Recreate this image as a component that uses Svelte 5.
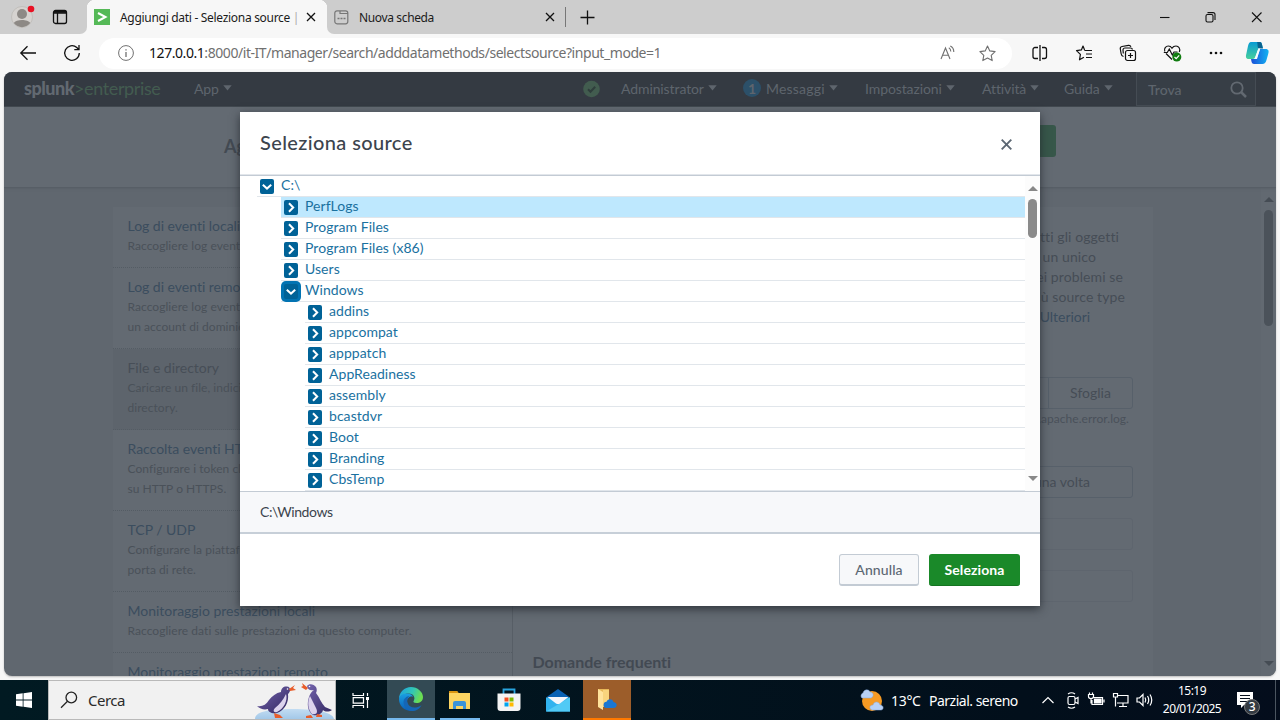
<script>
  const methods = [
    { title: 'Log di eventi locali', lines: ['Raccogliere log eventi'] },
    { title: 'Log di eventi remoti', lines: ['Raccogliere log eventi', 'un account di dominio.'] },
    { title: 'File e directory', lines: ['Caricare un file, indicizzare', 'directory.'], active: true },
    { title: 'Raccolta eventi HTTP', lines: ['Configurare i token che', 'su HTTP o HTTPS.'] },
    { title: 'TCP / UDP', lines: ['Configurare la piattaforma', 'porta di rete.'] },
    { title: 'Monitoraggio prestazioni locali', lines: ['Raccogliere dati sulle prestazioni da questo computer.'] },
    { title: 'Monitoraggio prestazioni remoto', lines: [] }
  ];
  const tree = [
    { name: 'C:\\', level: 0, open: true },
    { name: 'PerfLogs', level: 1, selected: true },
    { name: 'Program Files', level: 1 },
    { name: 'Program Files (x86)', level: 1 },
    { name: 'Users', level: 1 },
    { name: 'Windows', level: 1, open: true, focused: true },
    { name: 'addins', level: 2 },
    { name: 'appcompat', level: 2 },
    { name: 'apppatch', level: 2 },
    { name: 'AppReadiness', level: 2 },
    { name: 'assembly', level: 2 },
    { name: 'bcastdvr', level: 2 },
    { name: 'Boot', level: 2 },
    { name: 'Branding', level: 2 },
    { name: 'CbsTemp', level: 2 }
  ];
  const nav = ['Impostazioni', 'Attività', 'Guida'];
</script>

{#snippet caret()}
  <svg class="caret" width="9" height="6" viewBox="0 0 9 6"><path d="M.3.3h8.4L4.5 5.6z" fill="currentColor" /></svg>
{/snippet}

{#snippet cross()}
  <svg width="10" height="10" viewBox="0 0 10 10"><path d="M1 1l8 8M9 1l-8 8" stroke="#111" stroke-width="1.3" /></svg>
{/snippet}

<div class="screen">
  <div class="tabs">
    <div class="lead">
      <svg width="24" height="28" viewBox="0 0 24 28">
        <circle cx="11" cy="14" r="10.5" fill="#d6d3d0" stroke="#bab7b3" stroke-width=".7" />
        <circle cx="11" cy="11" r="5" fill="#8d8985" /><path d="M2.8 20c2-4 14.400-4 16.400 0-4 5.500-12.400 5.500-16.400 0z" fill="#8d8985" />
        <circle cx="20" cy="6" r="3.300" fill="#e81123" />
      </svg>
      <svg width="16" height="16" viewBox="0 0 16 16" fill="none" stroke="#111" stroke-width="1.300"><rect x="1.500" y="1.500" width="13" height="13" rx="2" /><path d="M1.500 4h13M5.500 4v10.500" /><path d="M2 2.800h12" stroke-width="2" /></svg>
    </div>
    <div class="tab active">
      <svg width="16" height="16" viewBox="0 0 16 16"><path d="M0 0h16v16H0z" fill="#55b957" /><path d="M4 4l7.500 4L4 12" fill="none" stroke="#fff" stroke-width="2" /></svg>
      <span class="tabtext one">Aggiungi dati - Seleziona source <i>|</i></span>
      {@render cross()}
    </div>
    <div class="tab second">
      <svg width="15" height="15" viewBox="0 0 15 15" fill="none" stroke="#777" stroke-width="1.200"><rect x=".8" y=".8" width="13" height="13" rx="2.200" /><path d="M6 1v2.500h8" /><path d="M3.500 8.500h8" stroke-dasharray="2 1" stroke-width="1.700" /></svg>
      <span class="tabtext two">Nuova scheda</span>
      {@render cross()}
      <b class="sep"></b>
      <svg width="15" height="15" viewBox="0 0 15 15"><path d="M7.500.5v14M.5 7.500h14" stroke="#111" stroke-width="1.300" /></svg>
    </div>
    <div class="winbtns">
      <svg width="108" height="14" viewBox="0 0 108 14" fill="none" stroke="#111" stroke-width="1.100"><path d="M0 7.500h9.500" /><rect x="46" y="4.500" width="7" height="7.500" rx="1.500" /><path d="M47.500 2.600h5.500a2 2 0 0 1 2 2v5.500" /><path d="M92 2.500l9.500 9.500M101.500 2.500L92 12" /></svg>
    </div>
  </div>

  <div class="toolbar">
    <svg width="18" height="16" viewBox="0 0 18 16" fill="none" stroke="#111" stroke-width="1.300"><path d="M17 8H2M8.500 1.300L1.800 8l6.700 6.700" /></svg>
    <svg class="reload" width="18" height="18" viewBox="0 0 18 18" fill="none" stroke="#111" stroke-width="1.300"><path d="M16.300 9a7.300 7.300 0 1 1-2.500-5.500L16 5.700M16 1v4.700h-4.700" /></svg>
    <div class="address">
      <svg width="16" height="16" viewBox="0 0 16 16" fill="none" stroke="#707070"><circle cx="8" cy="8" r="7.400" /><path d="M8 7v5M8 4.200v1.400" stroke-width="1.300" /></svg>
      <span class="url"><b>127.0.0.1</b>:8000/it-IT/manager/search/adddatamethods/selectsource?input_mode=1</span>
      <svg width="16" height="16" viewBox="0 0 16 16" fill="none" stroke="#707070" stroke-width="1.100"><path d="M1 14L5.500 3 10 14M2.600 10.300h5.800M8.800 2.800q2 1 2 3.700M10.300 1q3.500 1.600 3.500 6" /></svg>
      <svg class="star" width="17" height="17" viewBox="0 0 17 17" fill="none" stroke="#707070" stroke-width="1.100" stroke-linejoin="round"><path d="M8.500 1l2.300 4.900 5.300.7-3.900 3.700 1 5.300-4.700-2.600-4.700 2.600 1-5.300L.9 6.600l5.300-.7z" /></svg>
    </div>
    <div class="actions">
      <svg width="18" height="18" viewBox="0 0 18 18" fill="none" stroke="#111" stroke-width="1.300"><path d="M7 3.500H4a2 2 0 0 0-2 2v7a2 2 0 0 0 2 2h3M11 3.500h2.500a2 2 0 0 1 2 2v7a2 2 0 0 1-2 2H11M9 1v16" /></svg>
      <svg width="18" height="18" viewBox="0 0 18 18" fill="none" stroke="#111" stroke-width="1.200" stroke-linejoin="round"><path d="M9.500 6.500H17M11 10h6M11 13.500h6M8.900 13.200l-4.400 2.600.9-5.400-3.900-3.800 4.900-.7L8 2l1.600 3.900" /></svg>
      <svg width="18" height="18" viewBox="0 0 18 18" fill="none" stroke="#111" stroke-width="1.200"><rect x="6.500" y="6.500" width="10" height="10" rx="2" /><path d="M11.500 9v5M9 11.500h5M4.500 12.500A3 3 0 0 1 2.200 10L1.300 5A2.200 2.200 0 0 1 3 2.500L9.500 1.400a2.200 2.200 0 0 1 2.400 1.500M4.300 9.500L4 6a2 2 0 0 1 2-2h5.500a2 2 0 0 1 2 1.500" /></svg>
      <svg width="19" height="18" viewBox="0 0 19 18" fill="none" stroke="#111" stroke-width="1.200"><path d="M1.800 7.500C.6 4.500 3 2 5.300 2 7.300 2 8.400 3.200 9 4.200 9.800 3 11 2 13 2c2.500 0 4.800 2.800 3.300 6M9 15.500L3 9.500M.8 8.500h3.500L6.300 5l3 6 1.700-3h3.500" /><circle cx="13.800" cy="13" r="4.500" fill="#107c10" stroke="none" /><path d="M11.500 13l1.700 1.700 3-3.300" stroke="#fff" /></svg>
      <svg width="16" height="18" viewBox="0 0 16 18"><g fill="#111"><circle cx="3" cy="9" r="1.300" /><circle cx="8" cy="9" r="1.300" /><circle cx="13" cy="9" r="1.300" /></g></svg>
      <svg class="copilot" width="24" height="24" viewBox="0 0 24 24">
        <defs><linearGradient id="ca" x2="0" y2="1"><stop stop-color="#079bd4" /><stop offset="1" stop-color="#47cf9c" /></linearGradient><linearGradient id="cb" x2="1" y2="0"><stop stop-color="#1c4fd8" /><stop offset="1" stop-color="#13b3f2" /></linearGradient></defs>
        <path d="M9 23c-2.500 0-2.500-3-3-5h6l3-10h5.500c3.500 0 3.500 2.500 2.700 5L21.500 19c-.7 2.700-2 4-4 4z" fill="url(#cb)" />
        <path d="M6 1h9c2 0 2 3 3 6h-4.500l-3.500 9.500q-.7 1.500-2.500 1.500H4c-3 0-3.500-2-2.700-5L3 5c.7-2.500 1.500-4 3-4z" fill="url(#ca)" />
        <path d="M12 1h3c2 0 2 3 3 6.500h-4c-2 0-1-5-2-6.500z" fill="#08628f" /><path d="M13.500 7.500h1.800l-3.600 10H10z" fill="#f4fbff" />
      </svg>
    </div>
  </div>

  <div class="page">
    <div class="navbar">
      <div class="logo"><b>splunk</b><span>&gt;enterprise</span></div>
      <div class="item">App {@render caret()}</div>
      <svg width="18" height="18" viewBox="0 0 18 18"><circle cx="8.500" cy="9" r="8.300" fill="#425c4f" /><path d="M5 9.200l2.500 2.500 4.700-5" fill="none" stroke="#2f3e3c" stroke-width="2" /></svg>
      <div class="item">Administrator {@render caret()}</div>
      <div class="item"><span class="count">1</span><span class="msg">Messaggi</span> {@render caret()}</div>
      {#each nav as n}<div class="item">{n} {@render caret()}</div>{/each}
      <div class="find"><span>Trova</span>
        <svg width="17" height="17" viewBox="0 0 17 17" fill="none" stroke="#626971"><circle cx="7" cy="7" r="5.700" stroke-width="1.800" /><path d="M11 11l5 5" stroke-width="2.500" /></svg>
      </div>
    </div>
    <div class="subhead"><strong>Ag</strong><span class="next"></span></div>
    <div class="body">
      <div class="card">
        <div class="methods">
          {#each methods as m}
            <div class="method" class:on={m.active}>
              <h4>{m.title}</h4>
              {#each m.lines as l}<p>{l}</p>{/each}
            </div>
          {/each}
        </div>
        <div class="detail">
          <div class="copy">
            <p class="l1">tutti gli oggetti</p><p class="l2">un unico</p><p class="l3">dei problemi se</p><p class="l4">più source type</p><p class="l5">Ulteriori</p>
          </div>
          <div class="file"><span></span><span class="browse">Sfoglia</span></div>
          <p class="hint">\apache.error.log.</p>
          <div class="once">una volta</div>
          <div class="field"></div>
          <div class="field"></div>
          <h3>Domande frequenti</h3>
        </div>
      </div>
      <div class="pagebar"><i class="up"></i><i class="thumb"></i><i class="down"></i></div>
    </div>

    <div class="modal">
      <header><h2>Seleziona source</h2><svg width="13" height="13" viewBox="0 0 13 13"><path d="M1.700 1.700l9.600 9.600M11.300 1.700l-9.600 9.600" stroke="#5c6773" stroke-width="1.900" /></svg></header>
      <div class="browser">
        <div class="tree">
          {#each tree as t}
            <div class="row lv{t.level}" class:selected={t.selected}>
              <span class="toggle" class:focused={t.focused}>
                <svg width="14" height="15" viewBox="0 0 14 15" fill="none" stroke="#fff" stroke-width="2"><path d={t.open ? 'M2.800 5.700L7 9.600l4.200-3.900' : 'M5 3.200l4.200 4.300L5 11.800'} /></svg>
              </span>
              <span>{t.name}</span>
            </div>
          {/each}
        </div>
        <div class="treebar"><i class="up"></i><i class="thumb"></i><i class="down"></i></div>
      </div>
      <div class="path">C:\Windows</div>
      <footer><button class="cancel">Annulla</button><button class="ok">Seleziona</button></footer>
    </div>
  </div>

  <div class="taskbar">
    <div class="start"><svg width="16" height="16" viewBox="0 0 16 16"><path d="M0 2.300l6.700-1v6.300H0zM7.500 1.200L16 0v7.600H7.500zM0 8.400h6.700v6.300l-6.700-1zM7.500 8.400H16V16l-8.500-1.200z" fill="#fff" /></svg></div>
    <div class="search">
      <svg width="18" height="18" viewBox="0 0 18 18" fill="none" stroke="#222" stroke-width="1.300"><circle cx="11.300" cy="6.500" r="5.300" /><path d="M7.500 10.300L1 16.800" /></svg>
      <span>Cerca</span>
      <svg class="birds" width="80" height="38" viewBox="0 0 80 38">
        <defs><linearGradient id="ice" x2="0" y2="1"><stop stop-color="#c2dcf2" /><stop offset="1" stop-color="#a3c8e8" /></linearGradient><linearGradient id="coat" x2="1" y2="1"><stop stop-color="#7565ae" /><stop offset="1" stop-color="#30265f" /></linearGradient></defs>
        <path d="M0 38c0-7 12-10 38-10s40 4 41 10z" fill="url(#ice)" />
        <path d="M2 25c5 1 9-1 12-6 3-4 7-7 12-8 0-4 3-6 6-5.500 4 .5 4 5 1 7.500 1 8-3 16-11 19-5 1-9-1-9-4-4 1-8 0-11-3z" fill="url(#coat)" />
        <path d="M31 13c2 6-2 15-9 18-4 1-4-2-2-4 5-4 8-8 11-14z" fill="#dcd3ed" />
        <path d="M34 8l6-4-2 3 3 2-6 1zM19 32l6 2 3 3h-8z" fill="#e85d2b" /><circle cx="32.500" cy="8" r=".8" fill="#fff" />
        <path d="M59 9c-4 1-7-1-7-4 2-3 7-2 9 1 1 2 1 4 0 6 4 5 5 10 9 14l7 3c-3 2-7 2-9 0-1 4-5 6-10 5-6-4-6-12-4-18 1-3 2-5 5-7z" fill="url(#coat)" />
        <path d="M55 15c-3 6-2 14 2 18 5 1 6-2 4-6z" fill="#dcd3ed" />
        <path d="M53 7l-6-5 1 3-2 1 5 3zM51 35l5-1 2 3h-7zM62 33l5 1v2h-6z" fill="#e85d2b" /><circle cx="54.500" cy="5.500" r=".8" fill="#fff" />
      </svg>
    </div>
    <div class="app"><svg width="18" height="17" viewBox="0 0 18 17" fill="none" stroke="#fff" stroke-width="1.200"><path d="M1 1v2.500h10.500V1M1 16v-2.500h10.500V16M1.200 5.700h10.300v5.500H1.200zM15.500 1v3M15.500 8v8" /><path d="M14 5h3v3h-3z" fill="#fff" stroke="none" /></svg></div>
    <div class="app edge"><svg width="24" height="24" viewBox="0 0 24 24">
      <defs><linearGradient id="ea" x2="1" y2=".3"><stop stop-color="#1c9ee4" /><stop offset=".6" stop-color="#32c7b5" /><stop offset="1" stop-color="#6bdd52" /></linearGradient><linearGradient id="eb" x2="0" y2="1"><stop stop-color="#1aa0e2" /><stop offset="1" stop-color="#0a5fb8" /></linearGradient></defs>
      <path d="M0 12C0 5 5.500 0 12 0s12 5 12 10c0 4-3 6-6.500 6-3 0-4-1-3-2.200 2-2.700.5-7.300-5-7.300C5 6.500 1 9 0 12z" fill="url(#ea)" />
      <path d="M0 12c.5-4 4.500-6 9-5.500 3 .3 4.700 2 5 3.500-3-1-6.500 1-6 5 .4 4 4 8 8.500 8C7 26 0 20 0 12z" fill="url(#eb)" />
      <path d="M10.500 9c-2.500 2-3 5-1.500 8 2 4 8 5 13.500 1-2 4-5 6-10 6-5-.5-8-5-8-9 0-3 3-6 6-6z" fill="#1566b5" />
      <path d="M14.500 10c-3-1.500-5 0-5.200 3 0 4 4 6.500 8 6.200 2 0 4-.7 5.400-1.500.5-.5.200-1-.5-.8-4 1.300-9 0-7.700-3.100 1-1.300.9-2.700 0-3.800z" fill="#334a54" />
    </svg></div>
    <div class="app files"><svg width="22" height="20" viewBox="0 0 22 20"><path d="M0 1h8l1.500 2H21v16H0z" fill="#fcd462" /><path d="M0 1h8l1.500 2H0z" fill="#d99411" /><path d="M4 19v-6q0-2 2-2h9q2 0 2 2v6h-3v-3H7v3z" fill="#3b93d8" /></svg></div>
    <div class="app"><svg width="24" height="24" viewBox="0 0 24 24"><path d="M6.500 7V1.500h11V7" fill="none" stroke="#28a4de" stroke-width="1.800" /><path d="M.5 5.500h23V20a3 3 0 0 1-3 3h-17a3 3 0 0 1-3-3z" fill="#f4f4f4" /><path d="M7.500 9.500h4v4h-4z" fill="#f25022" /><path d="M12.500 9.500h4v4h-4z" fill="#7fba00" /><path d="M7.500 14.500h4v4h-4z" fill="#00a4ef" /><path d="M12.500 14.500h4v4h-4z" fill="#ffb900" /></svg></div>
    <div class="app"><svg width="24" height="23" viewBox="0 0 24 23"><path d="M0 8.500L12 0l12 8.500z" fill="#0862b5" /><path d="M0 8.500h24v14H0z" fill="#31b3ef" /><path d="M0 22.500L24 8.500v14z" fill="#51caf5" /><path d="M1.500 8h21L14 14.500q-2 1-4 0z" fill="#f4f7fc" /></svg></div>
    <div class="app orange"><svg width="22" height="22" viewBox="0 0 22 22"><path d="M2 1h11v18H2z" fill="#e8b858" /><path d="M2 1l5 3v18l-5-3z" fill="#ffe39c" /><path d="M7 2h6v17H7z" fill="#f8d47d" /><path d="M10 20a3.200 3.200 0 0 1 .5-6.300c2-4 6.500-2.700 7 .3 4.500.5 4 6 0 6z" fill="#1a77d2" /></svg></div>
    <div class="tray">
      <svg class="sun" width="25" height="23" viewBox="0 0 25 23"><circle cx="13" cy="12" r="10" fill="#f69a23" /><path d="M3 9a3 3 0 0 1 1-5C5 0 10 0 11 3c4 0 4 5 1 6zM13 21c-3-1-3-5 1-5 1-4 6-4 7 0 4 0 4 5 1 5z" fill="#b8d1f6" stroke="#86a9dd" stroke-width=".5" /></svg>
      <span class="temp">13°C</span><span class="cond">Parzial. sereno</span>
      <svg class="status" width="114" height="18" viewBox="0 0 114 18" fill="none" stroke="#fff" stroke-width="1.200">
        <path d="M1.500 12L7 6.500l5.500 5.500" /><rect x="27" y="5.500" width="7" height="8" rx="1.500" /><path d="M34 8l3-1.500v6L34 11M27 3q3.500-2.500 7 0M27 16q3.500 2.500 7 0" />
        <path d="M52 6.500h9.500v7H51V9M63 8.500v3M47.500 3.500h5v2q0 2-2.500 2t-2.500-2zM48.500 1.500v2M51.500 1.500v2M50 7.500v5" /><path d="M53.500 8h6.500v4h-6.500z" fill="#fff" />
        <path d="M77 4.500h10v7.500H76M82 12v3.500M78 15.500h8M72.500 2.500h4v3.500h-4zM74.500 6v9.500" />
        <path d="M96 7h2.500L102 3.500v11L98.500 11H96zM104 6.500q1.500 2.500 0 5M106.500 5q2.500 4 0 8M109 3.500q3.500 5.500 0 11" />
      </svg>
      <div class="clock"><span>15:19</span><span>20/01/2025</span></div>
      <div class="notes"><svg width="17" height="17" viewBox="0 0 17 17"><path d="M0 0h16v13H7l-3 3v-3H0z" fill="#fff" /><path d="M3 3.500h10M3 6.500h10M3 9.500h7" stroke="#07101e" stroke-width="1.200" /></svg><b>3</b></div>
      <i class="edgeline"></i>
    </div>
  </div>
</div>

<style>
  :global(body) { margin: 0; overflow: hidden; }
  * { box-sizing: border-box; }
  svg { display: block; flex: none; }
  h2, h3, h4, p { margin: 0; font-weight: 400; }
  .screen { width: 1280px; height: 720px; display: flex; flex-direction: column; background: #f7f7f7; font-family: 'Noto Sans', sans-serif; overflow: hidden; }

  .tabs { height: 34px; background: #f7f7f7; display: flex; align-items: center; flex: none; }
  .lead { width: 87px; height: 34px; padding-left: 11px; display: flex; align-items: center; gap: 17px; background: #cdcdcd; border-bottom-right-radius: 7px; }
  .tab { height: 34px; display: flex; align-items: center; color: #1b1b1b; }
  .tab.active { width: 240px; padding-left: 7px; background: radial-gradient(circle at 8px 8px, #f7f7f7 8px, #cdcdcd 8.5px) 0 0 / 8px 8px no-repeat, radial-gradient(circle at 0 8px, #f7f7f7 8px, #cdcdcd 8.5px) 100% 0 / 8px 8px no-repeat; flex: none; }
  .tabtext { font-size: 12px; white-space: nowrap; flex: none; }
  .tabtext i { color: #aaa; font-style: normal; }
  .one { width: 179px; margin: 0 7px 0 10px; letter-spacing: -.3px; }
  .second { padding-left: 7px; flex: 1; background: #cdcdcd; border-bottom-left-radius: 7px; }
  .two { width: 178px; margin: 0 8px 0 10px; letter-spacing: -.36px; }
  .sep { width: 1px; height: 20px; background: #777; margin: 0 14px 0 10px; }
  .winbtns { height: 34px; width: 120px; background: #cdcdcd; display: flex; align-items: center; }

  .toolbar { height: 38px; display: flex; align-items: center; padding-left: 19px; flex: none; }
  .reload { margin: 0 18px 0 26px; }
  .address { width: 913px; height: 31px; border-radius: 16px; background: #fff; display: flex; align-items: center; padding-left: 19px; }
  .url { width: 791px; margin: -1px 0 0 15px; font-size: 14px; letter-spacing: -.44px; color: #707070; white-space: nowrap; }
  .url b { font-weight: 400; color: #111; }
  .star { margin-left: 23px; }
  .actions { display: flex; align-items: center; gap: 26px; margin-left: 19px; }
  .copilot { margin-left: -5px; }

  .page { position: relative; width: 1272px; height: 604px; margin: 0 4px 4px; border-radius: 8px; overflow: hidden; flex: none; background: #60676f; font-family: Lato, sans-serif; display: flex; flex-direction: column; box-shadow: 0 1px 2px #bbb; }
  .navbar { height: 35px; flex: none; background: #343a42; display: grid; grid-template-columns: 170px 389px 38px 122px 122px 117px 82px 72px 120px; padding-left: 20px; align-items: center; color: #5e656d; border-bottom: 1px solid #40464e; }
  .item { display: flex; align-items: center; font-size: 14px; letter-spacing: -.1px; white-space: nowrap; padding-bottom: 2px; }
  .msg { letter-spacing: .2px; }
  .caret { margin-left: 4px; }
  .logo { font-size: 18px; letter-spacing: -.5px; white-space: nowrap; color: #626971; display: flex; padding-bottom: 2px; }
  .logo b { font-weight: 900; }
  .logo span { color: #435c50; letter-spacing: -.38px; }
  .count { width: 18px; height: 18px; border-radius: 50%; background: #2c5069; display: grid; place-items: center; margin-right: 5px; font-weight: 700; }
  .find { height: 34px; border: 1px solid #454c54; background: #373e46; display: flex; align-items: center; justify-content: space-between; padding: 0 8px 0 11px; font-size: 14px; font-weight: 500; }
  .find svg { margin-top: 1px; }
  .subhead { height: 81px; flex: none; background: #636a72; border-bottom: 1px solid #575e66; box-shadow: 0 1px 2px #5a6169; padding: 18px 220px 0; display: flex; justify-content: space-between; z-index: 1; }
  .subhead strong { font-size: 18px; line-height: 42px; font-weight: 700; color: #434a53; }
  .next { width: 92px; height: 32px; border-radius: 3px; background: #37574a; }
  .body { flex: 1; min-height: 0; display: flex; justify-content: space-between; padding-left: 109px; }
  .card { margin-top: 19px; width: 1040px; background: #636a72; display: flex; overflow: hidden; }
  .methods { width: 400px; border-right: 1px solid #575e66; flex: none; }
  .method { padding: 10px 0 10px 14.5px; border-bottom: 1px dotted #545c64; white-space: nowrap; }
  .method.on { background: #5d646c; }
  h4 { font-size: 14px; line-height: 20px; letter-spacing: -.02px; color: #3b4d5e; position: relative; top: -1px; }
  .on h4 { color: #474e57; }
  .method p { font-size: 12px; line-height: 20px; letter-spacing: .05px; color: #4a5159; position: relative; top: -1px; }
  .detail { flex: 1; padding: 20px 20px 0 19.5px; color: #464d56; font-size: 14px; }
  .copy p { line-height: 20px; text-align: right; letter-spacing: .1px; position: relative; top: -.5px; }
  .copy .l1 { padding-right: 14px; }
  .copy .l2 { padding-right: 37px; }
  .copy .l3 { padding-right: 10px; }
  .copy .l4 { padding-right: 8px; }
  .copy .l5 { padding-right: 43px; color: #3b4d5e; letter-spacing: -.05px; }
  .file { margin-top: 50px; height: 32px; border: 1px solid #57606a; border-radius: 3px; display: grid; grid-template-columns: 1fr 84px; }
  .browse { border-left: 1px solid #57606a; text-align: center; line-height: 29px; }
  .hint { text-align: right; padding-right: 4px; font-size: 12px; line-height: 20px; color: #4a515a; letter-spacing: .04px; }
  .once { margin-top: 37px; height: 32px; border: 1px solid #57606a; border-radius: 3px; line-height: 29px; text-align: right; padding-right: 42px; }
  .field { height: 32px; border: 1px solid #5e656e; border-radius: 3px; margin-top: 20px; }
  h3 { margin-top: 49px; font-size: 16px; line-height: 22px; font-weight: 700; color: #424952; letter-spacing: -.02px; }
  .pagebar, .treebar { width: 15px; display: flex; flex-direction: column; align-items: center; }
  .pagebar { padding: 9px 0 10px; color: #454c54; background: #626971; }
  .up, .down { width: 0; height: 0; border: 5px solid transparent; }
  .up { border-top: 0; border-bottom: 5px solid currentColor; }
  .down { border-bottom: 0; border-top: 5px solid currentColor; margin-top: auto; }
  .thumb { width: 9px; height: 116px; border-radius: 5px; background: #4b525a; margin-top: 8px; }

  .modal { position: absolute; left: 236px; top: 40px; width: 800px; height: 494px; background: #fff; box-shadow: 0 3px 9px #22272dcc; z-index: 3; display: flex; flex-direction: column; color: #3c444d; }
  header { height: 64px; border-bottom: 1px solid #c3cbd4; box-shadow: inset 0 -1px #e2e6eb; display: flex; align-items: center; justify-content: space-between; padding: 0 27px 2px 20px; flex: none; }
  header svg { margin-top: 4px; }
  h2 { font-size: 20px; font-weight: 500; line-height: 26px; letter-spacing: .38px; padding-bottom: 2px; }
  .browser { height: 315px; display: flex; overflow: hidden; flex: none; }
  .tree { width: 785px; font-size: 14px; color: #1a719f; letter-spacing: .05px; }
  .row { height: 21px; border-bottom: 1px solid #e1e6eb; display: flex; align-items: center; padding: 1px 0 0 3px; gap: 7px; line-height: 18px; }
  .row span:last-child { position: relative; top: -1.5px; }
  .lv0 { margin-left: 17px; }
  .lv1 { margin-left: 41px; }
  .lv2 { margin-left: 65px; }
  .selected { background: #bee8fe; }
  .toggle { width: 14px; height: 15px; border-radius: 2px; background: #006297; }
  .focused { box-shadow: 0 0 0 3px #0273b2; position: relative; }
  .treebar { background: #fcfcfc; color: #888; padding: 10px 0 10px; }
  .treebar .thumb { height: 39px; background: #8a8a8a; margin-top: 8px; }
  .path { height: 43px; border-top: 1px solid #c3cbd4; border-bottom: 2px solid #c7cfd8; background: #f7f8fa; padding-left: 20px; line-height: 39px; font-size: 14px; letter-spacing: -.42px; flex: none; }
  footer { display: flex; justify-content: flex-end; gap: 10px; padding: 20px 20px 0; }
  button { height: 32px; border-radius: 3px; font: 500 14px Lato, sans-serif; padding: 0 0 1px; letter-spacing: .1px; }
  .cancel { width: 80px; background: #f7f8fa; border: 1px solid #c3cbd4; border-bottom-width: 2px; color: #5c6773; }
  .ok { width: 91px; background: #1a8929; border: 0; border-bottom: 1px solid #147421; color: #fff; font-weight: 700; }

  .taskbar { height: 40px; display: flex; background: linear-gradient(90deg, #011a22, #020f1b 80%, #040d1c); color: #fff; flex: none; }
  .start { width: 48px; display: grid; place-items: center; }
  .search { width: 288px; height: 40px; border: 1px solid #b9b9b9; background: #f1f1f1; color: #2b2b2b; display: flex; align-items: center; padding-left: 11px; font-size: 15px; letter-spacing: -.5px; }
  .search span { margin-left: 10px; }
  .birds { margin-left: auto; }
  .app { width: 49px; height: 40px; display: grid; place-items: center; }
  .edge { width: 48px; margin-left: 2px; background: #334a54; border-bottom: 2px solid #76b9ed; }
  .files { background: linear-gradient(#76b9ed, #76b9ed) 5px 100% / 40px 2px no-repeat; }
  .orange { width: 48px; margin-left: 1px; background: #9c5d2a; border-bottom: 2px solid #ff7900; }
  .tray { flex: 1; display: flex; align-items: center; font-size: 14px; padding-left: 228px; letter-spacing: -.3px; white-space: nowrap; }
  .temp { width: 38px; margin-left: 7px; }
  .cond { width: 88px; letter-spacing: -.5px; }
  .status { margin-left: 24px; }
  .clock { width: 62px; margin-left: 6px; display: flex; flex-direction: column; align-items: center; font-size: 12px; line-height: 18px; letter-spacing: -.55px; }
  .notes { position: relative; margin-left: 14px; }
  .notes b { position: absolute; left: 7px; top: 7px; width: 16px; height: 16px; border-radius: 50%; background: #333a42; border: 1px solid #777; font-size: 12px; line-height: 14px; text-align: center; font-weight: 500; }
  .edgeline { width: 1px; height: 40px; background: #4b5560; margin: 0 4px 0 auto; }
</style>
